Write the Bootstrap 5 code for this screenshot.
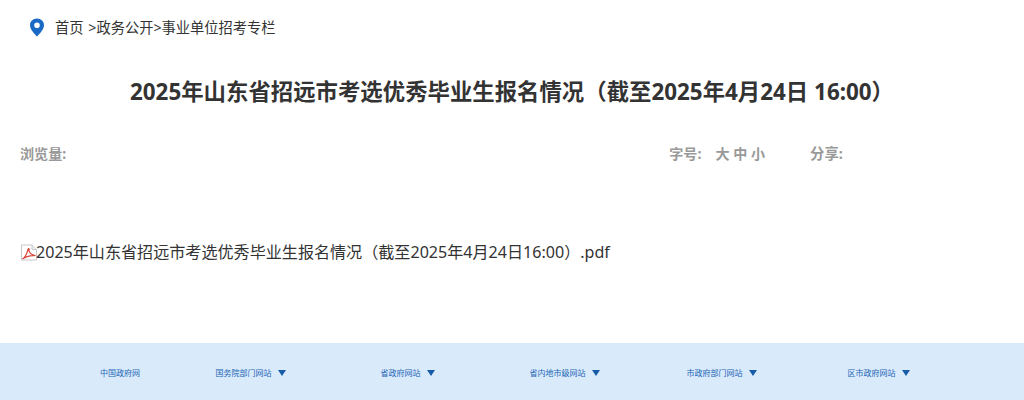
<!DOCTYPE html>
<html lang="zh-CN">
<head>
<meta charset="utf-8">
<title>2025年山东省招远市考选优秀毕业生报名情况</title>
<link href="https://cdn.jsdelivr.net/npm/bootstrap@5.3.0/dist/css/bootstrap.min.css" rel="stylesheet">
<style>
html,body{height:400px;overflow:hidden}
body{font-family:"Noto Sans","Noto Sans CJK SC",sans-serif;color:#333;background:#fff}
.crumb-bar{height:55px;padding-left:29px;font-size:14.25px;gap:10px;color:#333}
.crumb-bar a{color:#333;text-decoration:none}
.crumb-sep{margin-left:1px}
.page-title{font-size:22.4px;font-weight:700;line-height:32px;color:#333;margin:21px 0 0;height:32px}
.meta-bar{margin-top:35.5px;padding-left:20px;font-size:14.1px;font-weight:700;color:#999;line-height:20px;height:20px}
.meta-tools{margin-left:603px;gap:14px}
.meta-share{margin-left:45px;font-size:14.4px}
.attach-row{margin-top:76.5px;padding-left:21px;font-size:16.08px;line-height:24px;height:24px;color:#333}
.attach-row svg{flex:none}
.attach-name{margin-left:-1px}
.footer-bar{margin-top:79px;height:57px;background:#d9eafb;padding:3px 0 0 68px;font-size:8px;color:#1c66b5}
.footer-item{width:157px;gap:6px}
.footer-first{width:104px}
.footer-tri{width:0;height:0;border-left:4.5px solid transparent;border-right:4.5px solid transparent;border-top:6.5px solid #155ca8}
</style>
</head>
<body>
<nav class="crumb-bar d-flex align-items-center">
<svg width="16" height="19" viewBox="0 0 16 19"><path fill="#1a6ac6" fill-rule="evenodd" d="M8 0.5C3.9 0.5 1 3.5 1 7.2c0 4.3 4.6 8.700 7 11.300 2.400-2.600 7-7 7-11.300C15 3.500 12.100 .5 8 .5zM8 4.500a2.800 2.800 0 1 1 0 5.600 2.800 2.800 0 0 1 0-5.600z"/></svg>
<span><a href="#">首页</a> <span class="crumb-sep">&gt;</span><a href="#">政务公开</a>&gt;<a href="#">事业单位招考专栏</a></span>
</nav>
<h1 class="page-title text-center">2025年山东省招远市考选优秀毕业生报名情况（截至2025年4月24日 16:00）</h1>
<div class="meta-bar d-flex">
<span>浏览量:</span>
<div class="meta-tools d-flex"><span>字号:</span><span>大 中 小</span></div>
<span class="meta-share">分享:</span>
</div>
<div class="attach-row d-flex align-items-center">
<svg width="16" height="17" viewBox="0 0 16 16"><path d="M.5.500h10.500l4.500 4.500v10.500H.5z" fill="#fff" stroke="#c8c8c8"/><path d="M11 .5v4.500h4.500" fill="#eee" stroke="#c8c8c8"/><path d="M1.500 14.500c2.500-1.500 4.500-5.500 5.500-9.500.3-1.500 1.500-1 1 .5-.2 2 2 5 6.500 5.500-2.500.5-7.500-.5-13 3.500z" fill="none" stroke="#d8483f" stroke-width="1.200"/></svg>
<span class="attach-name">2025年山东省招远市考选优秀毕业生报名情况（截至2025年4月24日16:00）.pdf</span>
</div>
<footer class="footer-bar d-flex align-items-center">
<div class="footer-item footer-first d-flex justify-content-center align-items-center">中国政府网</div>
<div class="footer-item d-flex justify-content-center align-items-center">国务院部门网站<i class="footer-tri"></i></div>
<div class="footer-item d-flex justify-content-center align-items-center">省政府网站<i class="footer-tri"></i></div>
<div class="footer-item d-flex justify-content-center align-items-center">省内地市级网站<i class="footer-tri"></i></div>
<div class="footer-item d-flex justify-content-center align-items-center">市政府部门网站<i class="footer-tri"></i></div>
<div class="footer-item d-flex justify-content-center align-items-center">区市政府网站<i class="footer-tri"></i></div>
</footer>
<script src="https://cdn.jsdelivr.net/npm/bootstrap@5.3.0/dist/js/bootstrap.bundle.min.js"></script>
</body>
</html>
